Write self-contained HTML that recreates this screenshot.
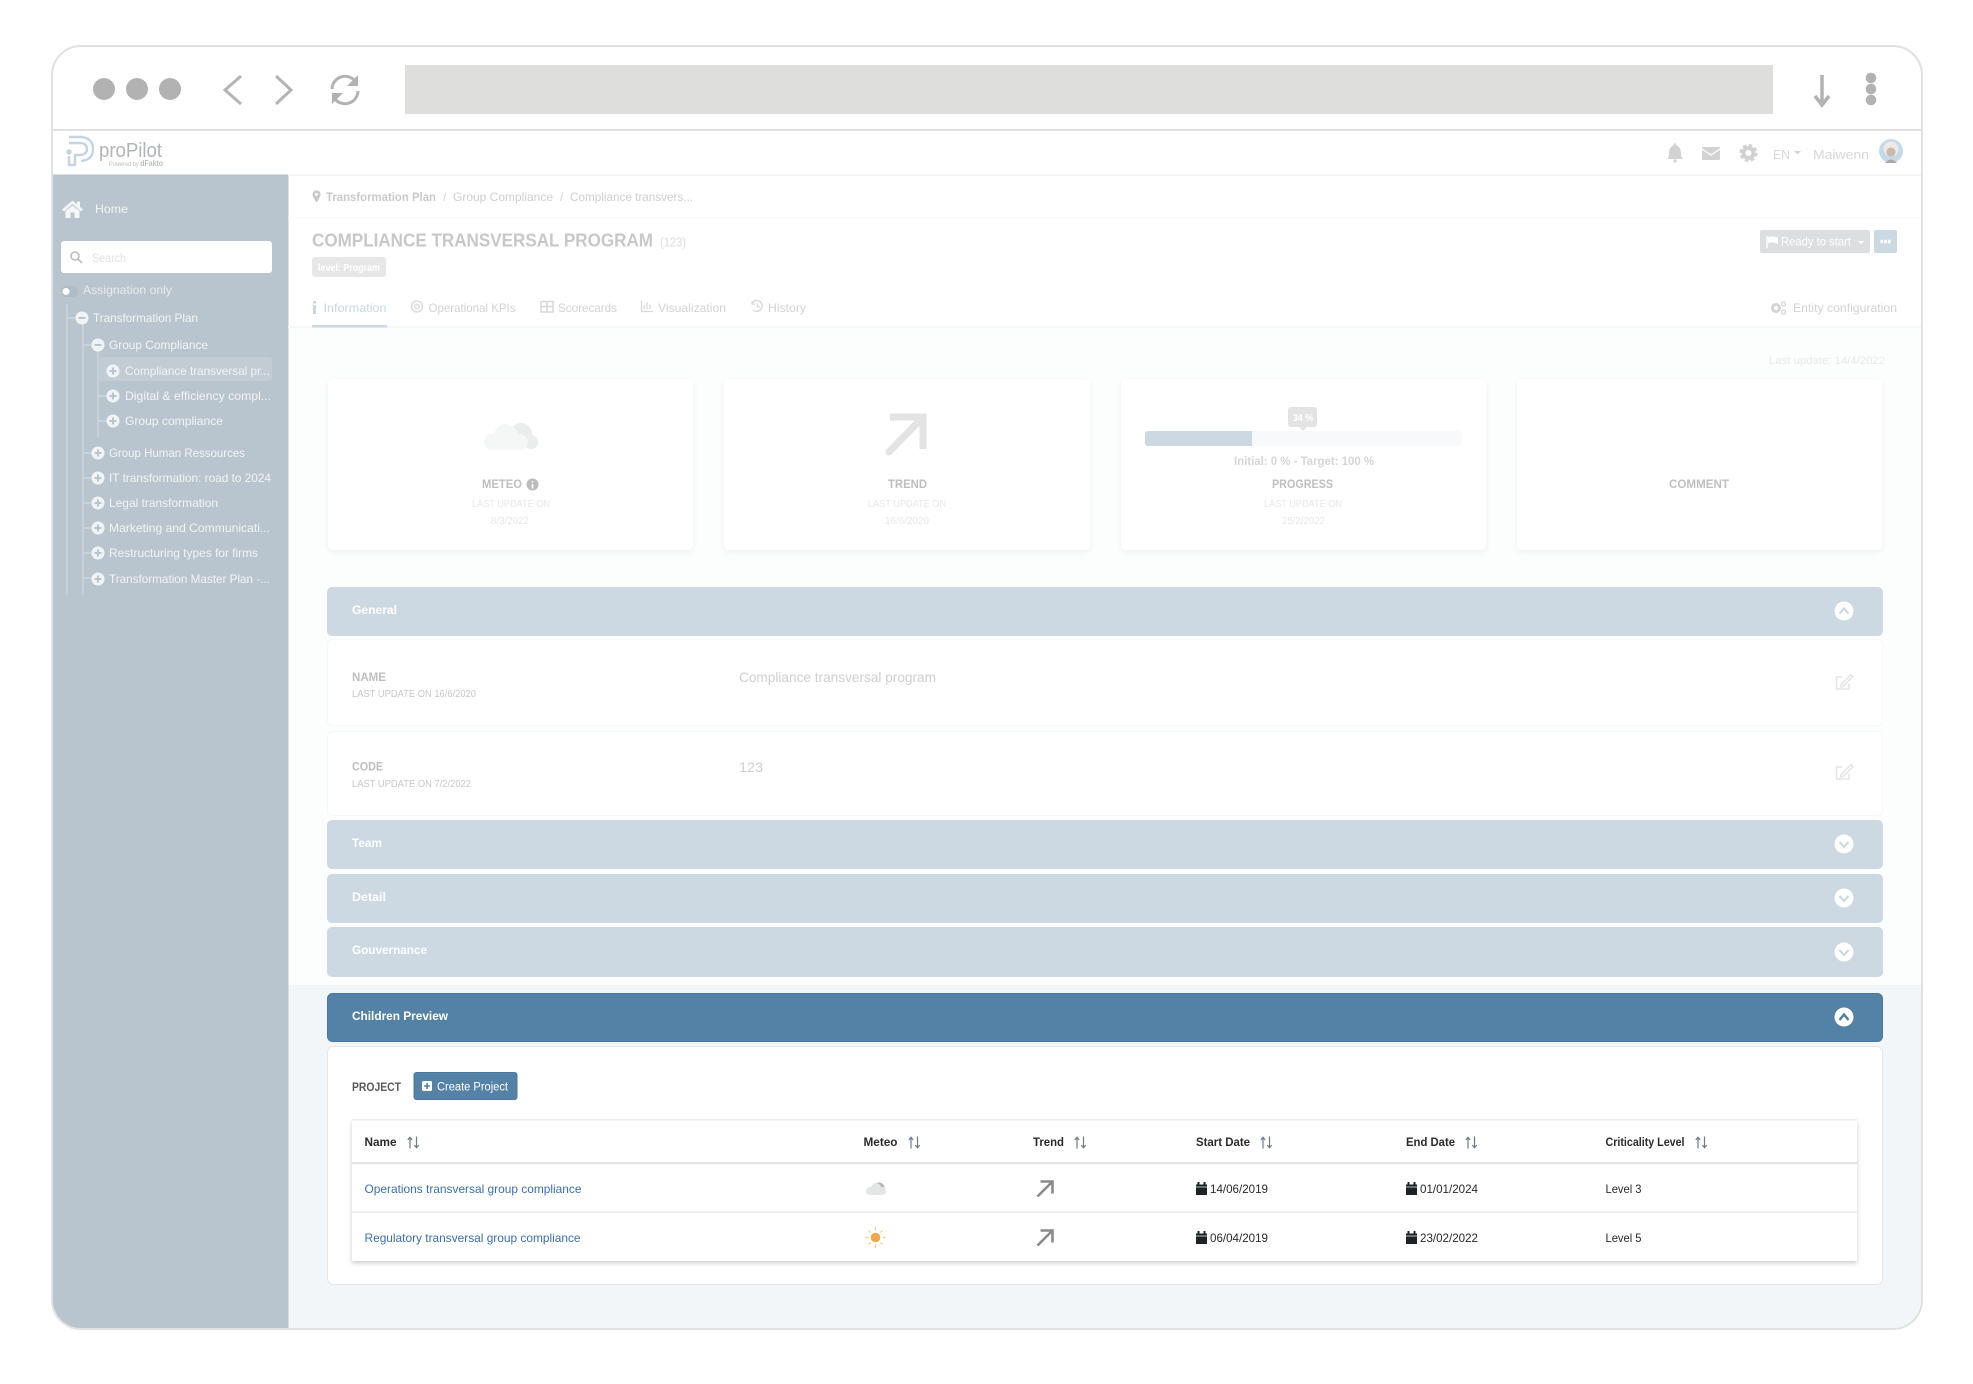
<!DOCTYPE html>
<html lang="en"><head><meta charset="utf-8"><title>proPilot</title>
<style>
html,body{margin:0;padding:0;background:#fff;width:1973px;height:1384px;overflow:hidden}
svg{display:block}
text{font-family:"Liberation Sans",sans-serif;white-space:pre}
.b{font-weight:bold}
.s{fill:#f1f4f6;font-size:12px}
.bar{fill:#fff;font-size:12px;font-weight:bold}
.lb{fill:#bfbfbf;font-size:12px;font-weight:bold}
.sm{fill:#e8e8e8;font-size:10px}
.tab{fill:#d3d3d3;font-size:12px}
.th{fill:#2b2b2b;font-size:12px;font-weight:bold}
.td{fill:#2a2a2a;font-size:12px}
.lnk{fill:#3b6dbb;font-size:12px}
</style></head><body>
<svg width="1973" height="1384" viewBox="0 0 1973 1384" xmlns="http://www.w3.org/2000/svg">
<defs>
<clipPath id="fc"><rect x="52" y="46" width="1870" height="1283" rx="29"/></clipPath>
<filter id="sh" x="-5%" y="-5%" width="110%" height="115%"><feDropShadow dx="0" dy="2" stdDeviation="3" flood-color="#000" flood-opacity=".05"/></filter>
<filter id="sh2" x="-2%" y="-5%" width="104%" height="112%"><feDropShadow dx="0" dy="2" stdDeviation="2.5" flood-color="#000" flood-opacity=".2"/></filter>
<g id="pl"><circle r="6.5" fill="#f1f4f6"/><path d="M-3.5 0H3.5M0-3.5V3.5" stroke="#b9c5ce" stroke-width="2"/></g>
<g id="mi"><circle r="6.5" fill="#f1f4f6"/><path d="M-3.5 0H3.5" stroke="#b9c5ce" stroke-width="2"/></g>
<g id="so" fill="none" stroke="#6f7a84" stroke-width="1.2"><path d="M3 1V12M.8 3.4L3 .8L5.2 3.4"/><path d="M9.5 0V11M7.3 8.6L9.5 11.2L11.7 8.6"/></g>
<g id="cu"><circle r="9.5" fill="#fff"/><path d="M-4.5 2.5L0-2.5L4.5 2.5" fill="none" stroke="#ccd9e3" stroke-width="2.2"/></g>
<g id="cd"><circle r="9.5" fill="#fff"/><path d="M-4.5-2L0 3L4.5-2" fill="none" stroke="#ccd9e3" stroke-width="2.2"/></g>
<g id="cal"><rect x="0" y="2.5" width="11" height="10.5" fill="#1d2226"/><path d="M2.5 0V3M8.5 0V3" stroke="#1d2226" stroke-width="2"/><path d="M0 5H11" stroke="#fff" stroke-width=".7"/></g>
<g id="ed" fill="none" stroke="#e6e6e6" stroke-width="1.6"><path d="M-1 -5H-6.5V7H6V1.5"/><path d="M-2 2.5L8-7.5L10-5.5L0 4.5L-2.5 5Z"/></g>
</defs>

<rect width="1973" height="1384" fill="#fff"/>
<g clip-path="url(#fc)">
  <rect x="52" y="46" width="1870" height="1283" fill="#fff"/>
  <rect x="288" y="327" width="1634" height="658" fill="#fcfdfd"/>
  <rect x="288" y="985" width="1634" height="345" fill="#f3f6f8"/>
  <rect x="52" y="174.500" width="236.500" height="1155.500" fill="#b9c5ce"/>
  <rect x="52" y="129" width="1870" height="2" fill="#e0e1e1"/>
  <rect x="288" y="174.500" width="1634" height="1.500" fill="#f1f2f3"/>
  <rect x="288" y="217" width="1634" height="1" fill="#f8f8f8"/>
  <rect x="288" y="326" width="1634" height="2" fill="#f4f6f8"/>
</g>
<rect x="52" y="46" width="1870" height="1283" rx="29" fill="none" stroke="#e0e1e1" stroke-width="2"/>

<!-- browser chrome -->
<circle cx="104" cy="89" r="11" fill="#b2b2b2"/><circle cx="137" cy="89" r="11" fill="#b2b2b2"/><circle cx="170" cy="89" r="11" fill="#b2b2b2"/>
<path d="M241 76L225 90L241 104M276 76L291 90L276 104" fill="none" stroke="#b4b4b4" stroke-width="3"/>
<path d="M332 89A13 13 0 0 1 355 81M358 91A13 13 0 0 1 335 99" fill="none" stroke="#b2b2b2" stroke-width="3"/>
<path d="M358 75V86H347ZM332 104V93H343Z" fill="#b2b2b2"/>
<rect x="405" y="65" width="1368" height="49" fill="#dededc"/>
<path d="M1822 75V103M1815 96L1822 105L1829 96" fill="none" stroke="#b2b2b2" stroke-width="3.500"/>
<circle cx="1871" cy="78" r="5.300" fill="#b2b2b2"/><circle cx="1871" cy="89" r="5.300" fill="#b2b2b2"/><circle cx="1871" cy="100" r="5.300" fill="#b2b2b2"/>

<!-- app header -->
<g fill="none" stroke="#c3d5e2" stroke-width="2.400">
  <path d="M69 137H81Q93 138 93 149Q93 160 81 161"/>
  <path d="M69 143H81Q87 144 87 149Q87 154 81 155H75V165H69V156"/>
  <circle cx="69" cy="152" r="1.500"/>
</g>
<text x="99" y="157" font-size="20" fill="#b2b5b8" textLength="63" lengthAdjust="spacingAndGlyphs">proPilot</text>
<text x="109" y="166" font-size="6.500" fill="#bcbfc1" textLength="54" lengthAdjust="spacingAndGlyphs">Powered by <tspan font-weight="bold" font-size="8">dFakto</tspan></text>
<path d="M1675 145C1670 146 1669 150 1669 154C1669 157 1668 158 1667 159H1683C1682 158 1681 157 1681 154C1681 150 1680 146 1675 145Z" fill="#d2d2d2"/><circle cx="1675" cy="161" r="1.600" fill="#d2d2d2"/><circle cx="1675" cy="144.500" r="1.300" fill="#d2d2d2"/>
<rect x="1702" y="147" width="18" height="13" rx="1" fill="#d2d2d2"/><path d="M1702 149L1711 155L1720 149" fill="none" stroke="#fff" stroke-width="1.200"/>
<circle cx="1748.500" cy="153" r="5" fill="none" stroke="#d2d2d2" stroke-width="4"/><circle cx="1748.500" cy="153" r="7.500" fill="none" stroke="#d2d2d2" stroke-width="3" stroke-dasharray="3.500 2.390"/>
<text x="1773" y="159" font-size="13" fill="#d8d8d8" textLength="17" lengthAdjust="spacingAndGlyphs">EN</text><path d="M1794 151H1801L1797.500 154.500Z" fill="#d5d5d5"/>
<text x="1813" y="159" font-size="13" fill="#d8d8d8" textLength="56" lengthAdjust="spacingAndGlyphs">Maiwenn</text>
<circle cx="1891" cy="151" r="12" fill="#c6d9e8"/><circle cx="1891" cy="149" r="7.500" fill="#ece9e6"/><circle cx="1891" cy="152" r="4.500" fill="#c9b8ae"/><path d="M1885 163Q1891 156 1897 163Z" fill="#a9a9a9"/>

<!-- sidebar -->
<path d="M72.500 200.500L62 209.500L64 211.500L72.500 204L81 211.500L83 209.500L80 207V201.500H77V204.500Z" fill="#f4f6f7"/>
<path d="M65.500 211V218H70.500V212.500H74.500V218H79.500V211L72.500 205.500Z" fill="#f4f6f7"/>
<text x="95" y="213" class="s" textLength="33" lengthAdjust="spacingAndGlyphs">Home</text>
<rect x="61" y="241" width="211" height="32" rx="3" fill="#fff"/>
<circle cx="75" cy="256" r="4" fill="none" stroke="#bdbdbd" stroke-width="1.600"/><path d="M78 259L82 263" stroke="#bdbdbd" stroke-width="1.800"/>
<text x="92" y="262" font-size="11.500" fill="#e2e2e2" textLength="34" lengthAdjust="spacingAndGlyphs">Search</text>
<rect x="61" y="286" width="17" height="11" rx="5.500" fill="#b0bbc4"/><circle cx="66" cy="291.500" r="3.500" fill="#fff"/>
<text x="83" y="294" class="s" fill-opacity=".8" textLength="89" lengthAdjust="spacingAndGlyphs">Assignation only</text>
<path d="M67 304V595M83 323V595M98 350V437M67 318H76M83 345H92M83 453H92M83 478H92M83 503H92M83 528H92M83 553H92M83 578H92M98 371H107M98 396H107M98 421H107" stroke="#d3d9de" stroke-width="1.200" fill="none"/>
<rect x="99" y="357" width="173" height="24" rx="3" fill="#c2ccd4"/>
<use href="#mi" x="82" y="318"/><text x="93" y="322" class="s" textLength="105" lengthAdjust="spacingAndGlyphs">Transformation Plan</text>
<use href="#mi" x="98" y="345"/><text x="109" y="349" class="s" textLength="99" lengthAdjust="spacingAndGlyphs">Group Compliance</text>
<use href="#pl" x="113" y="371"/><text x="125" y="375" class="s" textLength="145" lengthAdjust="spacingAndGlyphs">Compliance transversal pr...</text>
<use href="#pl" x="113" y="396"/><text x="125" y="400" class="s" textLength="146" lengthAdjust="spacingAndGlyphs">Digital &amp; efficiency compl...</text>
<use href="#pl" x="113" y="421"/><text x="125" y="425" class="s" textLength="98" lengthAdjust="spacingAndGlyphs">Group compliance</text>
<use href="#pl" x="98" y="453"/><text x="109" y="457" class="s" textLength="136" lengthAdjust="spacingAndGlyphs">Group Human Ressources</text>
<use href="#pl" x="98" y="478"/><text x="109" y="482" class="s" textLength="162" lengthAdjust="spacingAndGlyphs">IT transformation: road to 2024</text>
<use href="#pl" x="98" y="503"/><text x="109" y="507" class="s" textLength="109" lengthAdjust="spacingAndGlyphs">Legal transformation</text>
<use href="#pl" x="98" y="528"/><text x="109" y="532" class="s" textLength="161" lengthAdjust="spacingAndGlyphs">Marketing and Communicati...</text>
<use href="#pl" x="98" y="553"/><text x="109" y="557" class="s" textLength="149" lengthAdjust="spacingAndGlyphs">Restructuring types for firms</text>
<use href="#pl" x="98" y="579"/><text x="109" y="583" class="s" textLength="161" lengthAdjust="spacingAndGlyphs">Transformation Master Plan -...</text>

<!-- breadcrumb + title -->
<path d="M316.500 190.500C313.500 190.500 312.500 192.700 312.500 194.500C312.500 197 316.500 202.500 316.500 202.500C316.500 202.500 320.500 197 320.500 194.500C320.500 192.700 319.500 190.500 316.500 190.500Z" fill="#c9c9c9"/><circle cx="316.500" cy="194.500" r="1.500" fill="#fff"/>
<text x="326" y="201" font-size="12" font-weight="bold" fill="#cacaca" textLength="110" lengthAdjust="spacingAndGlyphs">Transformation Plan</text>
<text x="443" y="201" font-size="12" fill="#d6d6d6">/</text>
<text x="453" y="201" font-size="12" fill="#cfcfcf" textLength="100" lengthAdjust="spacingAndGlyphs">Group Compliance</text>
<text x="560" y="201" font-size="12" fill="#d6d6d6">/</text>
<text x="570" y="201" font-size="12" fill="#cfcfcf" textLength="123" lengthAdjust="spacingAndGlyphs">Compliance transvers...</text>
<text x="312" y="246.500" font-size="18" font-weight="bold" fill="#c8c8c8" textLength="341" lengthAdjust="spacingAndGlyphs">COMPLIANCE TRANSVERSAL PROGRAM</text>
<text x="660" y="246.500" font-size="13" fill="#dcdcdc" textLength="26" lengthAdjust="spacingAndGlyphs">(123)</text>
<rect x="312" y="257" width="74" height="20" rx="3" fill="#e7e7e7"/>
<text x="318" y="271" font-size="10.500" font-weight="bold" fill="#fff" textLength="62" lengthAdjust="spacingAndGlyphs">level: Program</text>

<rect x="1760" y="230" width="110" height="23" rx="2" fill="#dcdedf"/>
<path d="M1767 236V248" stroke="#fff" stroke-width="1.500"/><path d="M1768 237Q1773 235 1778 238V244Q1773 241 1768 243Z" fill="#fff"/>
<text x="1781" y="245.500" font-size="12" fill="#fff" textLength="70" lengthAdjust="spacingAndGlyphs">Ready to start</text><path d="M1858 241H1864L1861 244Z" fill="#fff"/>
<rect x="1874" y="230" width="23" height="23" rx="2" fill="#ccd9e3"/><path d="M1880.500 241.500H1890.500" stroke="#fff" stroke-width="3.500" stroke-dasharray="2.600 1.100"/>

<!-- tabs -->
<rect x="313" y="301" width="3" height="2.500" fill="#c9d8e4"/><rect x="313" y="305" width="3" height="9" fill="#c9d8e4"/>
<text x="323.500" y="312" font-size="12" fill="#c7d7e3" textLength="63" lengthAdjust="spacingAndGlyphs">Information</text>
<rect x="312" y="325" width="75" height="2.500" fill="#cddbe6"/>
<circle cx="417" cy="306.500" r="5.500" fill="none" stroke="#d8d8d8" stroke-width="1.300"/><circle cx="417" cy="306.500" r="2.300" fill="none" stroke="#d8d8d8" stroke-width="1.200"/>
<text x="428.500" y="312" class="tab" textLength="87" lengthAdjust="spacingAndGlyphs">Operational KPIs</text>
<path d="M541 301.500H553V312H541ZM547 301.500V312M541 306.500H553" fill="none" stroke="#d8d8d8" stroke-width="1.500"/>
<text x="558" y="312" class="tab" textLength="59" lengthAdjust="spacingAndGlyphs">Scorecards</text>
<path d="M641.500 301V311.500H653M644 309V305M647 309V302.500M650 309V304.500" fill="none" stroke="#d8d8d8" stroke-width="1.300"/>
<text x="658" y="312" class="tab" textLength="68" lengthAdjust="spacingAndGlyphs">Visualization</text>
<path d="M752 303A5.500 5.500 0 1 1 753 310M752 301V304H755M757.500 303.500V307H760" fill="none" stroke="#d8d8d8" stroke-width="1.300"/>
<text x="768" y="312" class="tab" textLength="38" lengthAdjust="spacingAndGlyphs">History</text>
<circle cx="1776" cy="308" r="3.500" fill="none" stroke="#d4d4d4" stroke-width="3"/><circle cx="1783.500" cy="304" r="2" fill="none" stroke="#d4d4d4" stroke-width="1.300"/><circle cx="1783.500" cy="312" r="2" fill="none" stroke="#d4d4d4" stroke-width="1.300"/>
<text x="1793" y="312" class="tab" textLength="104" lengthAdjust="spacingAndGlyphs">Entity configuration</text>
<text x="1769" y="364" font-size="11" fill="#e8e8e8" textLength="116" lengthAdjust="spacingAndGlyphs">Last update: 14/4/2022</text>

<!-- cards -->
<g fill="#fff" filter="url(#sh)">
  <rect x="328" y="379" width="365" height="171" rx="5"/>
  <rect x="724" y="379" width="366" height="171" rx="5"/>
  <rect x="1121" y="379" width="365" height="171" rx="5"/>
  <rect x="1517" y="379" width="365" height="171" rx="5"/>
</g>
<g transform="translate(-2 0)"><circle cx="523" cy="434" r="11" fill="#ebecec"/><circle cx="533" cy="442" r="7" fill="#ebecec"/><g fill="#f5f6f6"><circle cx="494" cy="442" r="8"/><circle cx="508" cy="436" r="12"/><circle cx="522" cy="442" r="8"/><rect x="494" y="440" width="28" height="10"/></g></g>
<path d="M890 417H923V449" fill="none" stroke="#e3e3e3" stroke-width="7"/><path d="M923 417L889 452" fill="none" stroke="#e3e3e3" stroke-width="7" stroke-linecap="round"/>
<text x="482" y="488" class="lb" textLength="40" lengthAdjust="spacingAndGlyphs">METEO</text>
<circle cx="532.500" cy="484.500" r="6" fill="#bcbcbc"/><path d="M532.500 481V482.500M532.500 484V488.500" stroke="#fff" stroke-width="1.600"/>
<text x="472" y="507" class="sm" textLength="78" lengthAdjust="spacingAndGlyphs">LAST UPDATE ON</text>
<text x="491" y="524" class="sm" textLength="38" lengthAdjust="spacingAndGlyphs">8/3/2022</text>
<text x="888" y="488" class="lb" textLength="39" lengthAdjust="spacingAndGlyphs">TREND</text>
<text x="868" y="507" class="sm" textLength="78" lengthAdjust="spacingAndGlyphs">LAST UPDATE ON</text>
<text x="885" y="524" class="sm" textLength="44" lengthAdjust="spacingAndGlyphs">16/6/2020</text>
<rect x="1145" y="431" width="317" height="15" rx="3" fill="#f7f9fa"/>
<path d="M1252 431H1148A3 3 0 0 0 1145 434V443A3 3 0 0 0 1148 446H1252Z" fill="#ccd9e3"/>
<rect x="1288" y="407" width="29" height="20" rx="3" fill="#e3e3e3"/><path d="M1299 427H1307L1303 431Z" fill="#e3e3e3"/>
<text x="1293" y="421" font-size="10" font-weight="bold" fill="#fff" textLength="20" lengthAdjust="spacingAndGlyphs">34 %</text>
<text x="1234" y="465" font-size="12" font-weight="bold" fill="#d6d6d6" textLength="140" lengthAdjust="spacingAndGlyphs">Initial: 0 % - Target: 100 %</text>
<text x="1272" y="488" class="lb" textLength="61" lengthAdjust="spacingAndGlyphs">PROGRESS</text>
<text x="1264" y="507" class="sm" textLength="78" lengthAdjust="spacingAndGlyphs">LAST UPDATE ON</text>
<text x="1282" y="524" class="sm" textLength="43" lengthAdjust="spacingAndGlyphs">25/2/2022</text>
<text x="1669" y="488" class="lb" textLength="60" lengthAdjust="spacingAndGlyphs">COMMENT</text>

<!-- accordions -->
<rect x="327" y="587" width="1556" height="49" rx="5" fill="#ccd9e3"/>
<text x="352" y="614" class="bar" textLength="45" lengthAdjust="spacingAndGlyphs">General</text>
<use href="#cu" x="1844" y="611"/>
<rect x="327.500" y="639.500" width="1555" height="86" rx="5" fill="#fff" stroke="#f6f7f8"/>
<text x="352" y="681" class="lb" textLength="34" lengthAdjust="spacingAndGlyphs">NAME</text>
<text x="352" y="697" font-size="10" fill="#c8c8c8" textLength="124" lengthAdjust="spacingAndGlyphs">LAST UPDATE ON 16/6/2020</text>
<text x="739" y="682" font-size="14" fill="#cfcfcf" textLength="197" lengthAdjust="spacingAndGlyphs">Compliance transversal program</text>
<use href="#ed" x="1843" y="682"/>
<rect x="327.500" y="731.500" width="1555" height="84" rx="5" fill="#fff" stroke="#f6f7f8"/>
<text x="352" y="770.500" class="lb" textLength="31" lengthAdjust="spacingAndGlyphs">CODE</text>
<text x="352" y="787" font-size="10" fill="#c8c8c8" textLength="119" lengthAdjust="spacingAndGlyphs">LAST UPDATE ON 7/2/2022</text>
<text x="739" y="772" font-size="14" fill="#cfcfcf" textLength="24" lengthAdjust="spacingAndGlyphs">123</text>
<use href="#ed" x="1843" y="772"/>
<rect x="327" y="820" width="1556" height="49" rx="5" fill="#ccd9e3"/>
<text x="352" y="847" class="bar" textLength="30" lengthAdjust="spacingAndGlyphs">Team</text>
<use href="#cd" x="1844" y="844"/>
<rect x="327" y="874" width="1556" height="49" rx="5" fill="#ccd9e3"/>
<text x="352" y="901" class="bar" textLength="34" lengthAdjust="spacingAndGlyphs">Detail</text>
<use href="#cd" x="1844" y="898"/>
<rect x="327" y="927" width="1556" height="50" rx="5" fill="#ccd9e3"/>
<text x="352" y="954" class="bar" textLength="75" lengthAdjust="spacingAndGlyphs">Gouvernance</text>
<use href="#cd" x="1844" y="952"/>

<!-- children preview -->
<rect x="327.500" y="993.500" width="1555" height="48" rx="5" fill="#5481a6" stroke="#4a78a0"/>
<text x="352" y="1020" class="bar" textLength="96" lengthAdjust="spacingAndGlyphs">Children Preview</text>
<circle cx="1844" cy="1017" r="9.500" fill="#fff"/><path d="M1839.500 1020L1844 1014.500L1848.500 1020" fill="none" stroke="#4f7ea6" stroke-width="2.400"/>
<rect x="327.500" y="1046.500" width="1555" height="238" rx="6" fill="#fff" stroke="#e4e7e9"/>
<text x="352" y="1091" font-size="12" font-weight="bold" fill="#5a5a5a" textLength="49" lengthAdjust="spacingAndGlyphs">PROJECT</text>
<rect x="414" y="1072.500" width="103" height="27" rx="2.500" fill="#5481a6" stroke="#4a78a0"/>
<rect x="422" y="1081" width="10" height="10" rx="1.500" fill="#fff"/><path d="M424 1086H430M427 1083V1089" stroke="#5481a6" stroke-width="1.600"/>
<text x="437" y="1090.500" font-size="11.500" fill="#fff" textLength="71" lengthAdjust="spacingAndGlyphs">Create Project</text>

<!-- table -->
<rect x="352" y="1120" width="1505" height="141" fill="#fff" filter="url(#sh2)"/>
<rect x="352" y="1119" width="1505" height="1.500" fill="#eceeef"/>
<rect x="352" y="1162" width="1505" height="2.200" fill="#e3e5e7"/>
<rect x="352" y="1211.500" width="1505" height="1.400" fill="#e8eaeb"/>
<text x="364.500" y="1146" class="th" textLength="32" lengthAdjust="spacingAndGlyphs">Name</text><use href="#so" x="407" y="1136.500"/>
<text x="863.500" y="1146" class="th" textLength="34" lengthAdjust="spacingAndGlyphs">Meteo</text><use href="#so" x="908" y="1136.500"/>
<text x="1033" y="1146" class="th" textLength="31" lengthAdjust="spacingAndGlyphs">Trend</text><use href="#so" x="1074" y="1136.500"/>
<text x="1196" y="1146" class="th" textLength="54" lengthAdjust="spacingAndGlyphs">Start Date</text><use href="#so" x="1260" y="1136.500"/>
<text x="1406" y="1146" class="th" textLength="49" lengthAdjust="spacingAndGlyphs">End Date</text><use href="#so" x="1465" y="1136.500"/>
<text x="1605.500" y="1146" class="th" textLength="79" lengthAdjust="spacingAndGlyphs">Criticality Level</text><use href="#so" x="1695" y="1136.500"/>

<text x="364.500" y="1193" class="lnk" textLength="217" lengthAdjust="spacingAndGlyphs">Operations transversal group compliance</text>
<g><circle cx="879" cy="1188" r="5.500" fill="#b4b6b7"/><circle cx="879" cy="1188" r="4" fill="#e4e6e6" transform="translate(-1 1)"/><g fill="#e4e6e6"><circle cx="870" cy="1191" r="4"/><circle cx="876" cy="1188" r="5"/><circle cx="882" cy="1191" r="4"/><rect x="870" y="1190" width="12" height="5"/></g></g>
<path d="M1040.500 1181.500H1052.500V1193.500M1052.500 1181.500L1037.500 1196.500" fill="none" stroke="#8a8a8a" stroke-width="2.600"/>
<use href="#cal" x="1196" y="1182"/><text x="1210" y="1193" class="td" textLength="58" lengthAdjust="spacingAndGlyphs">14/06/2019</text>
<use href="#cal" x="1406" y="1182"/><text x="1420" y="1193" class="td" textLength="58" lengthAdjust="spacingAndGlyphs">01/01/2024</text>
<text x="1605.500" y="1193" class="td" textLength="36" lengthAdjust="spacingAndGlyphs">Level 3</text>

<text x="364.500" y="1242" class="lnk" textLength="216" lengthAdjust="spacingAndGlyphs">Regulatory transversal group compliance</text>
<circle cx="875.500" cy="1237.500" r="4.800" fill="#f2a74a"/><path d="M875.500 1227V1230.500M875.500 1244.500V1248M865.500 1237.500H868.500M882.500 1237.500H885.500M868.500 1230.500L870.500 1232.500M880.500 1242.500L882.500 1244.500M882.500 1230.500L880.500 1232.500M870.500 1242.500L868.500 1244.500" stroke="#f7c98a" stroke-width="1.200"/>
<path d="M1040.500 1230.500H1052.500V1242.500M1052.500 1230.500L1037.500 1245.500" fill="none" stroke="#8a8a8a" stroke-width="2.600"/>
<use href="#cal" x="1196" y="1231"/><text x="1210" y="1242" class="td" textLength="58" lengthAdjust="spacingAndGlyphs">06/04/2019</text>
<use href="#cal" x="1406" y="1231"/><text x="1420" y="1242" class="td" textLength="58" lengthAdjust="spacingAndGlyphs">23/02/2022</text>
<text x="1605.500" y="1242" class="td" textLength="36" lengthAdjust="spacingAndGlyphs">Level 5</text>
</svg>
</body></html>
